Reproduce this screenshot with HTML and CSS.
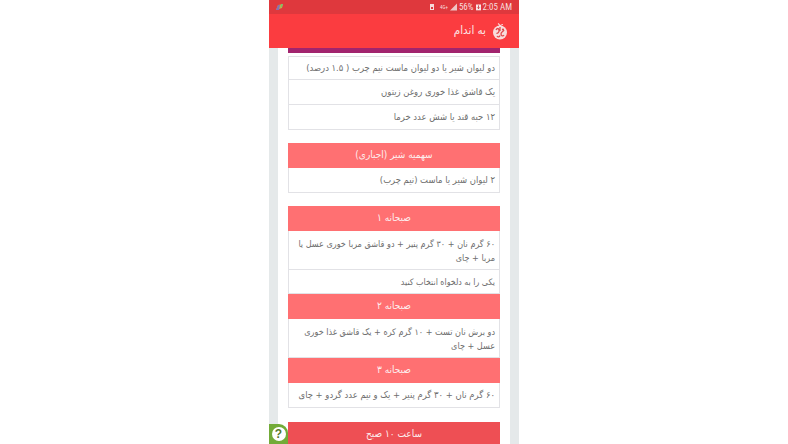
FILE: index.html

```html
<!DOCTYPE html>
<html lang="fa">
<head>
    <meta charset="UTF-8">
    <meta name="viewport" content="width=device-width, initial-scale=1.0">
    <link rel="stylesheet" href="styles.css">
    <title>به اندام</title>
</head>
<body>
    <div class="phone">
        <div class="status-bar">
            <svg class="notify-icon" width="9" height="8" viewBox="0 0 9 8">
                <path d="M1 7 L3 2 L8 1 L7 5 Z" fill="#b9b04e"/>
                <path d="M1 7 L3 2 L5 2 L4 7 Z" fill="#8a6fb0"/>
                <path d="M6 1 L8 1 L7 4 L6 4 Z" fill="#7fbf6a"/>
            </svg>
            <div class="status-right">
                <svg class="lock" width="6" height="8" viewBox="0 0 6 8"><path d="M1 1 H5 V7 H1 Z M2 4 H4 V6 H2 Z" fill="#f6d9d9" fill-rule="evenodd"/></svg>
                <span class="net">4G+</span>
                <svg width="7" height="8" viewBox="0 0 8 8"><path d="M0 8 L8 0 V8 Z" fill="#efc4c6"/></svg>
                <span>56%</span>
                <svg width="5" height="8" viewBox="0 0 6 8"><path d="M0 1 H6 V8 H0 Z" fill="#f8e6e6"/><path d="M3 2 V6 M1.5 4.5 L3 6 L4.5 4.5" stroke="#c83236" fill="none"/></svg>
                <span>2:05 AM</span>
            </div>
        </div>
        <div class="app-bar">
            <svg class="logo" width="16" height="17" viewBox="0 0 16 17">
                <circle cx="8" cy="9.5" r="7" fill="#f8dcdc"/>
                <path d="M8 3 C7.5 2 7 1.2 6 .6 M8 3 C9 1.8 10 1.5 11 1.5" stroke="#f8dcdc" stroke-width="1.2" fill="none"/>
                <path d="M8 4 V8 M4 7 C5 5 6.500 5 7 7 C7.500 9 5.500 11 4.500 10 M12 7 C11 9 9 9 9 11 C9 13 11 13.500 12 12 M5 13 C6 14.500 7.500 14 8 12.500" stroke="#e0484c" stroke-width="1.3" fill="none"/>
                <circle cx="11" cy="6.500" r="1.100" fill="#e0484c"/>
            </svg>
            <span class="app-title">به اندام</span>
        </div>

        <div class="content">
            <div class="panel">
                <div class="plan first">
                    <div class="strip"></div>
                    <div class="item">دو لیوان شیر یا دو لیوان ماست نیم چرب ( ۱.۵ درصد)</div>
                    <div class="item">یک قاشق غذا خوری روغن زیتون</div>
                    <div class="item">۱۲ حبه قند یا شش عدد خرما</div>
                </div>

                <div class="plan">
                    <div class="title">سهمیه شیر (اجباری)</div>
                    <div class="item">۲ لیوان شیر یا ماست (نیم چرب)</div>
                </div>

                <div class="plan">
                    <div class="title">صبحانه ۱</div>
                    <div class="item tall">۶۰ گرم نان + ۳۰ گرم پنیر + دو قاشق مربا خوری عسل یا مربا + چای</div>
                    <div class="item note">یکی را به دلخواه انتخاب کنید</div>
                    <div class="title">صبحانه ۲</div>
                    <div class="item tall">دو برش نان تست + ۱۰ گرم کره + یک قاشق غذا خوری عسل + چای</div>
                    <div class="title">صبحانه ۳</div>
                    <div class="item long">۶۰ گرم نان + ۳۰ گرم پنیر + یک و نیم عدد گردو + چای</div>
                </div>

                <div class="plan last">
                    <div class="title dark">ساعت ۱۰ صبح</div>
                </div>
            </div>
        </div>

        <div class="help"><span>?</span></div>
    </div>
</body>
</html>
```

FILE: styles.css

```css
html, body {
    height: 100%;
}

body {
    margin: 0;
    background-color: #fff;
    font-family: 'DejaVu Sans', 'Noto Sans', sans-serif;
    font-stretch: condensed;
    overflow: hidden;
}

.phone {
    position: relative;
    width: 250px;
    height: 444px;
    margin: 0 auto;
    overflow: hidden;
    background-color: #e5e9ea;
}

.status-bar {
    display: flex;
    align-items: center;
    justify-content: space-between;
    height: 14px;
    padding: 0 7px 0 6px;
    background-color: #df383d;
    color: #f8dcdc;
    font-family: 'Roboto', sans-serif;
    font-size: 9px;
}

.status-right {
    display: flex;
    align-items: center;
    gap: 2px;
}

.lock {
    margin-right: 3px;
}

.net {
    font-size: 5px;
}

.app-bar {
    display: flex;
    flex-direction: row-reverse;
    align-items: center;
    gap: 6px;
    height: 34px;
    padding: 0 11px 0;
    box-sizing: border-box;
    background-color: #fb3c40;
    color: #fbe6e6;
}

.app-title {
    margin-bottom: 3px;
    font-size: 11.5px;
}

.content {
    padding: 0 9px;
}

.panel {
    height: 396px;
    padding: 0 10px;
    background-color: #fff;
}

.plan {
    margin-bottom: 13px;
    direction: rtl;
}

.plan.last {
    margin-top: 14px;
}

.strip {
    height: 5px;
    margin-bottom: 3px;
    background-color: #a2246e;
}

.title {
    height: 25px;
    background-color: #ff7072;
    color: #fdeeee;
    font-size: 10px;
    line-height: 24px;
    text-align: center;
}

.title.dark {
    background-color: #ee4f54;
}

.item {
    height: 25px;
    padding: 0 4px;
    box-sizing: border-box;
    border: 1px solid #e2e2e6;
    border-top: 0;
    color: #6e6e6e;
    font-size: 9.4px;
    line-height: 23px;
}

.first .item:nth-child(2) {
    height: 24px;
    border-top: 1px solid #e2e2e6;
    line-height: 21px;
}

.item.tall {
    height: 39px;
    padding-top: 6px;
    font-size: 9px;
    line-height: 14px;
}

.item.long {
    white-space: nowrap;
}

.item.note {
    height: 24px;
    font-size: 8.8px;
    line-height: 24px;
}

.help {
    position: absolute;
    left: 0;
    bottom: 0;
    display: flex;
    align-items: center;
    justify-content: center;
    width: 19px;
    height: 20px;
    border-top-right-radius: 9px;
    background-color: #73ab38;
}

.help span {
    width: 14px;
    height: 14px;
    border-radius: 50%;
    background-color: #fff;
    color: #55792c;
    font-family: 'Liberation Sans', sans-serif;
    font-size: 12px;
    font-weight: bold;
    line-height: 14px;
    text-align: center;
}
```
